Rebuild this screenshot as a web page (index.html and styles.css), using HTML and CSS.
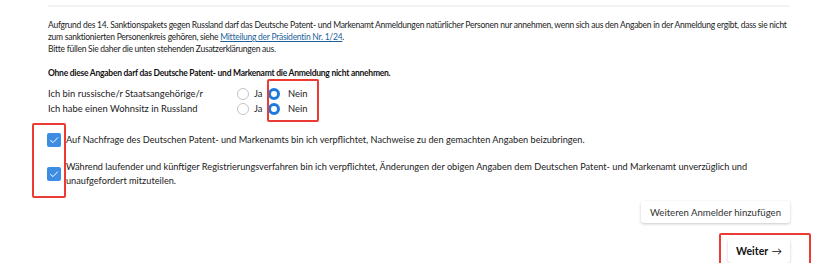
FILE: index.html
```html
<!DOCTYPE html>
<html lang="de">
<head>
    <meta charset="UTF-8">
    <title>Zusatzerklärungen</title>
    <link rel="stylesheet" href="styles.css">
</head>
<body>
    <div class="page">
        <div class="divider"></div>

        <p class="intro">
            Aufgrund des 14. Sanktionspakets gegen Russland darf das Deutsche Patent- und Markenamt Anmeldungen natürlicher Personen nur annehmen, wenn sich aus den Angaben in der Anmeldung ergibt, dass sie nicht<br>
            zum sanktionierten Personenkreis gehören, siehe <a href="#">Mitteilung der Präsidentin Nr. 1/24</a>.<br>
            Bitte füllen Sie daher die unten stehenden Zusatzerklärungen aus.
        </p>

        <p class="notice">Ohne diese Angaben darf das Deutsche Patent- und Markenamt die Anmeldung nicht annehmen.</p>

        <div class="questions">
            <span class="question">Ich bin russische/r Staatsangehörige/r</span>
            <label class="option"><span class="radio"></span>Ja</label>
            <label class="option"><span class="radio checked"></span>Nein</label>

            <span class="question">Ich habe einen Wohnsitz in Russland</span>
            <label class="option"><span class="radio"></span>Ja</label>
            <label class="option"><span class="radio checked"></span>Nein</label>

            <div class="mark mark-radio"></div>
        </div>

        <div class="confirmations">
            <label class="confirm">
                <span class="checkbox">
                    <svg viewBox="0 0 14 14" width="14" height="14"><path d="M3.5 7.4 L6 9.6 L10.6 4.8" fill="none" stroke="#fff" stroke-width="1" stroke-linecap="round" stroke-linejoin="round"/></svg>
                </span>
                <span class="confirm-text">Auf Nachfrage des Deutschen Patent- und Markenamts bin ich verpflichtet, Nachweise zu den gemachten Angaben beizubringen.</span>
            </label>
            <label class="confirm">
                <span class="checkbox">
                    <svg viewBox="0 0 14 14" width="14" height="14"><path d="M3.5 7.4 L6 9.6 L10.6 4.8" fill="none" stroke="#fff" stroke-width="1" stroke-linecap="round" stroke-linejoin="round"/></svg>
                </span>
                <span class="confirm-text">Während laufender und künftiger Registrierungsverfahren bin ich verpflichtet, Änderungen der obigen Angaben dem Deutschen Patent- und Markenamt unverzüglich und unaufgefordert mitzuteilen.</span>
            </label>
            <div class="mark mark-check"></div>
        </div>

        <div class="actions">
            <button class="btn">Weiteren Anmelder hinzufügen</button>
            <div class="next-wrap">
                <button class="btn btn-next">Weiter <span class="arrow">&rarr;</span></button>
                <div class="mark mark-next"></div>
            </div>
        </div>
    </div>
</body>
</html>
```

FILE: styles.css
```css
body {
    margin: 0;
    background: #fff;
    color: #222;
    font-family: Lato, Arial, sans-serif;
}
.page {
    width: 742px;
    margin-left: 48px;
    padding-top: 5px;
}
.divider {
    height: 2px;
    background: #f3f3f3;
}
.intro,
.notice {
    margin: 12px 0 0;
    font-size: 8.5px;
    letter-spacing: -0.25px;
    line-height: 12px;
    color: #222;
    white-space: nowrap;
}
.intro a {
    color: #1d5f9a;
}
.notice {
    font-weight: bold;
    color: #111;
}
.questions {
    position: relative;
    display: grid;
    grid-template-columns: 189px 31px auto;
    grid-auto-rows: 15px;
    align-items: center;
    margin-top: 7px;
    font-size: 9.4px;
    color: #222;
}
.option {
    display: flex;
    align-items: center;
    gap: 5px;
}
.radio {
    box-sizing: border-box;
    width: 12px;
    height: 12px;
    border: 1px solid #c4c4c4;
    border-radius: 50%;
}
.radio.checked {
    border: 3px solid #1a7ae0;
    margin-right: 3px;
}
.mark {
    position: absolute;
    border: 2px solid #ec3b35;
    border-radius: 2px;
}
.mark-radio {
    left: 219px;
    top: -7px;
    width: 48px;
    height: 39px;
}
.confirmations {
    position: relative;
    margin-top: 17px;
    font-size: 9.2px;
    line-height: 14px;
    color: #222;
}
.confirm {
    display: flex;
    align-items: center;
    margin-bottom: 13px;
}
.confirm-text {
    max-width: 700px;
}
.checkbox {
    flex: none;
    width: 14px;
    height: 14px;
    margin-left: -1px;
    margin-right: 5px;
    background: #3d8de3;
    border-radius: 2px;
}
.checkbox svg {
    display: block;
}
.mark-check {
    left: -16px;
    top: -10px;
    width: 30px;
    height: 71px;
}
.actions {
    display: flex;
    flex-direction: column;
    align-items: flex-end;
    margin-top: 4px;
}
.btn {
    font-family: Lato, sans-serif;
    font-size: 9.6px;
    color: #333;
    background: #fff;
    border: none;
    border-radius: 3px;
    padding: 0 9px;
    height: 22px;
    box-shadow: 0 1px 3px rgba(0, 0, 0, 0.22);
    cursor: pointer;
}
.next-wrap {
    position: relative;
    margin-top: 16px;
}
.btn-next {
    height: 24px;
    padding: 0 8px;
    font-weight: bold;
    font-size: 10.5px;
    color: #111;
}
.arrow {
    font-weight: normal;
    margin-left: 1px;
}
.mark-next {
    left: -9px;
    top: -6px;
    width: 88px;
    height: 31px;
}
```
